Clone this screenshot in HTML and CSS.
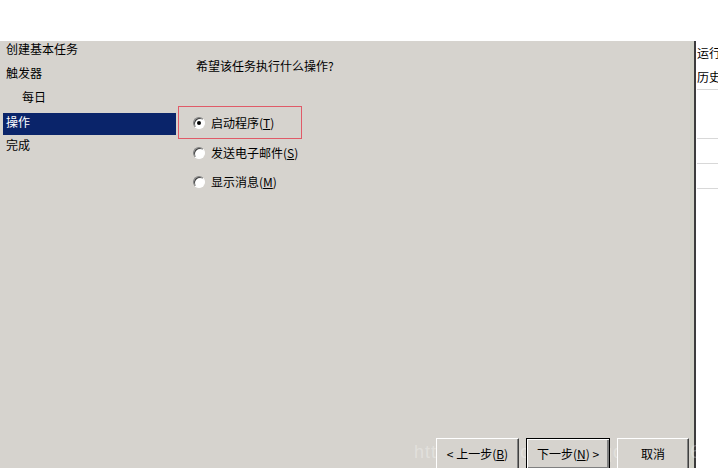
FILE: index.html
```html
<!DOCTYPE html>
<html lang="zh-CN">
<head>
    <meta charset="UTF-8">
    <title>创建基本任务向导 - 操作</title>
    <link rel="stylesheet" href="styles.css">
</head>
<body>
    <div class="screen">

        <!-- Fenêtre de l'assistant -->
        <div class="wizard">
            <div class="wizard-top"></div>
            <div class="wizard-panel">
                <div class="wizard-main">
                    <ul class="nav">
                        <li class="nav-item">创建基本任务</li>
                        <li class="nav-item">触发器</li>
                        <li class="nav-item sub">每日</li>
                        <li class="nav-item active">操作</li>
                        <li class="nav-item">完成</li>
                    </ul>
                    <div class="content">
                        <p class="question">希望该任务执行什么操作?</p>
                        <div class="options">
                            <label class="option marked">
                                <span class="radio checked"></span>启动程序(<u>T</u>)
                            </label>
                            <label class="option">
                                <span class="radio"></span>发送电子邮件(<u>S</u>)
                            </label>
                            <label class="option">
                                <span class="radio"></span>显示消息(<u>M</u>)
                            </label>
                        </div>
                    </div>
                </div>
                <div class="footer">
                    <div class="watermark">https://blog.csdn.net/qq_41900606</div>
                    <button class="btn">&lt; 上一步(<u>B</u>)</button>
                    <button class="btn default">下一步(<u>N</u>) &gt;</button>
                    <button class="btn">取消</button>
                </div>
            </div>
        </div>

        <div class="edge"></div>

        <!-- Fenêtre derrière -->
        <div class="behind">
            <div class="behind-row first">运行</div>
            <div class="behind-row line">历史</div>
            <div class="behind-blank"></div>
            <div class="behind-row line"></div>
            <div class="behind-row line"></div>
            <div class="behind-row line"></div>
        </div>
    </div>
</body>
</html>
```

FILE: styles.css
```css
/* Page */
html, body {
    margin: 0;
    padding: 0;
}
body {
    font-family: "Noto Sans CJK SC", "Liberation Sans", sans-serif;
    font-size: 12px;
    color: #000;
    background: #fff;
}
.screen {
    display: flex;
    width: 718px;
    height: 468px;
    overflow: hidden;
}

/* Assistant */
.wizard {
    display: flex;
    flex-direction: column;
    width: 690px;
}
.wizard-top {
    height: 41px;
    background: #fff;
}
.wizard-panel {
    flex: 1;
    display: flex;
    flex-direction: column;
    background-color: #d6d3ce;
}
.wizard-main {
    flex: 1;
    display: flex;
}

/* Navigation gauche */
.nav {
    list-style: none;
    margin: 0;
    padding: 0 0 0 3px;
    width: 173px;
}
.nav-item {
    height: 16px;
    line-height: 16px;
    padding: 0 3px 6px;
    margin-bottom: 2px;
    white-space: nowrap;
}
.nav-item.sub {
    padding-left: 19px;
}
.nav-item.active {
    padding-top: 1px;
    padding-bottom: 5px;
    background-color: #0a246a;
    color: #fff;
}

/* Contenu */
.content {
    flex: 1;
    padding: 17px 0 0 2px;
}
.question {
    margin: 0 0 32px 18px;
    line-height: 16px;
}
.options {
    display: flex;
    flex-direction: column;
    align-items: flex-start;
}
.option {
    display: flex;
    align-items: center;
    height: 16px;
    line-height: 16px;
    padding-left: 15px;
    margin-top: 13px;
    white-space: nowrap;
}
.option.marked {
    width: 108px;
    height: 31px;
    padding-left: 14px;
    margin-top: 0;
    border: 1px solid #e05a68;
}
.option.marked + .option {
    margin-top: 6px;
}
.radio {
    position: relative;
    width: 10px;
    height: 10px;
    margin-right: 6px;
    border-radius: 50%;
    background: #fff;
    border: 1px solid;
    border-color: #808080 #ffffff #ffffff #808080;
    box-shadow: inset 1px 1px 0 #404040;
}
.radio.checked::after {
    content: "";
    position: absolute;
    left: 3px;
    top: 3px;
    width: 4px;
    height: 4px;
    border-radius: 50%;
    background: #000;
}
u {
    text-decoration: underline;
    text-underline-offset: 1px;
}

/* Boutons du bas */
.footer {
    position: relative;
    display: flex;
    justify-content: flex-end;
    gap: 7px;
    height: 30px;
    padding-right: 1px;
}
.btn {
    position: relative;
    height: 32px;
    padding: 0 0 2px;
    font-family: inherit;
    font-size: 12px;
    color: #000;
    background-color: #d6d3ce;
    border: 1px solid;
    border-color: #ffffff #404040 #404040 #ffffff;
    box-shadow: inset -1px -1px 0 #808080;
}
.btn:nth-of-type(1) {
    width: 83px;
}
.btn.default {
    width: 84px;
    border: 1px solid #000;
    box-shadow: inset 1px 1px 0 #fff, inset -2px -2px 0 #808080;
}
.btn:nth-of-type(3) {
    width: 72px;
}

/* Filigrane, derrière les boutons */
.watermark {
    position: absolute;
    left: 414px;
    top: 4px;
    font-family: "Liberation Sans", sans-serif;
    font-size: 18px;
    letter-spacing: 1px;
    color: rgba(255, 255, 255, 0.3);
    white-space: nowrap;
    pointer-events: none;
}

/* Bord et fenêtre derrière */
.edge {
    width: 4px;
    margin-top: 41px;
    background-color: #d0d1c6;
    border-right: 2px solid #3c3c3c;
}
.behind {
    flex: 1;
    padding-left: 1px;
    white-space: nowrap;
    overflow: hidden;
}
.behind-row {
    height: 24px;
    line-height: 24px;
}
.behind-row.first {
    margin-top: 41px;
}
.behind-row.line {
    border-bottom: 1px solid #d8d8d8;
}
.behind-blank {
    height: 24px;
}
```
